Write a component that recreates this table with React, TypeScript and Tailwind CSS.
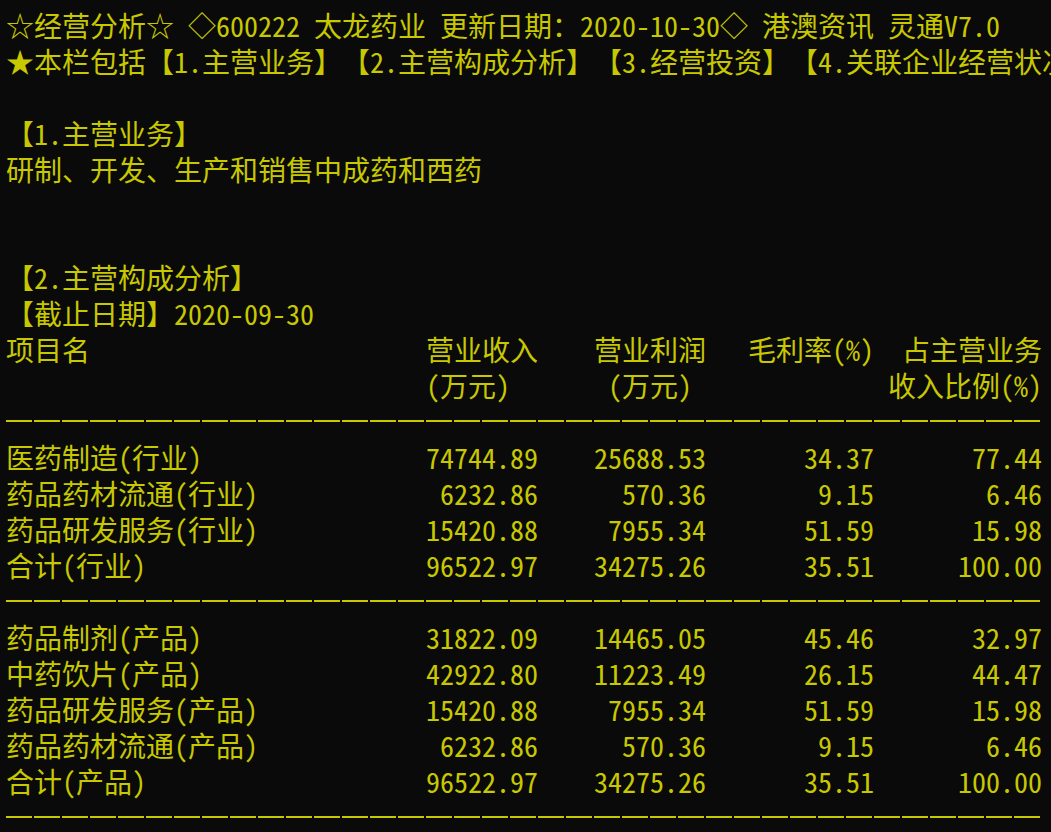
const wide = (ch: string) => (ch.codePointAt(0) ?? 0) >= 0x2500;
const dw = (s: string) => [...s].reduce((a, c) => a + (wide(c) ? 2 : 1), 0);

// build a fixed-column text line: positive col = left edge, negative col = right edge
const cols = (...segs: [number, string][]) => {
  let s = "";
  for (const [col, t] of segs) {
    const start = col < 0 ? -col - dw(t) : col;
    s += " ".repeat(Math.max(0, start - dw(s))) + t;
  }
  return s;
};

const row = (name: string, a: string, b: string, c: string, d: string) =>
  cols([0, name], [-38, a], [-50, b], [-62, c], [-74, d]);

const DASH = "---";

const lines: string[] = [
  "☆经营分析☆ ◇600222 太龙药业 更新日期：2020-10-30◇ 港澳资讯 灵通V7.0",
  "★本栏包括【1.主营业务】【2.主营构成分析】【3.经营投资】【4.关联企业经营状况】",
  "",
  "【1.主营业务】",
  "研制、开发、生产和销售中成药和西药",
  "",
  "",
  "【2.主营构成分析】",
  "【截止日期】2020-09-30",
  cols([0, "项目名"], [30, "营业收入"], [42, "营业利润"], [53, "毛利率(%)"], [64, "占主营业务"]),
  cols([30, "(万元)"], [43, "(万元)"], [63, "收入比例(%)"]),
  DASH,
  row("医药制造(行业)", "74744.89", "25688.53", "34.37", "77.44"),
  row("药品药材流通(行业)", "6232.86", "570.36", "9.15", "6.46"),
  row("药品研发服务(行业)", "15420.88", "7955.34", "51.59", "15.98"),
  row("合计(行业)", "96522.97", "34275.26", "35.51", "100.00"),
  DASH,
  row("药品制剂(产品)", "31822.09", "14465.05", "45.46", "32.97"),
  row("中药饮片(产品)", "42922.80", "11223.49", "26.15", "44.47"),
  row("药品研发服务(产品)", "15420.88", "7955.34", "51.59", "15.98"),
  row("药品药材流通(产品)", "6232.86", "570.36", "9.15", "6.46"),
  row("合计(产品)", "96522.97", "34275.26", "35.51", "100.00"),
  DASH,
];

const Line = ({ text }: { text: string }) => {
  if (text === DASH) {
    return (
      <div className="h-[36px] flex items-center">
        <div className="h-[2px] w-[1036px] bg-[repeating-linear-gradient(90deg,#c8c800_0_26px,transparent_26px_28px)]" />
      </div>
    );
  }
  return (
    <div className="h-[36px] leading-[36px] whitespace-nowrap">
      {[...text].map((ch, i) =>
        wide(ch) ? (
          <span key={i} className="inline-block w-[28px] text-center">
            {ch}
          </span>
        ) : (
          <span key={i} className="inline-block w-[14px] text-center">
            {ch === " " ? "\u00a0" : ch}
          </span>
        )
      )}
    </div>
  );
};

export default function App() {
  return (
    <div className="w-[1051px] h-[832px] overflow-hidden bg-[#0a0a0a] text-[#c8c800] text-[28px] font-light pt-[7px] pl-[6px] font-['Noto_Sans_Mono_CJK_SC','Noto_Sans_CJK_SC',monospace]">
      {lines.map((t, i) => (
        <Line key={i} text={t} />
      ))}
    </div>
  );
}
